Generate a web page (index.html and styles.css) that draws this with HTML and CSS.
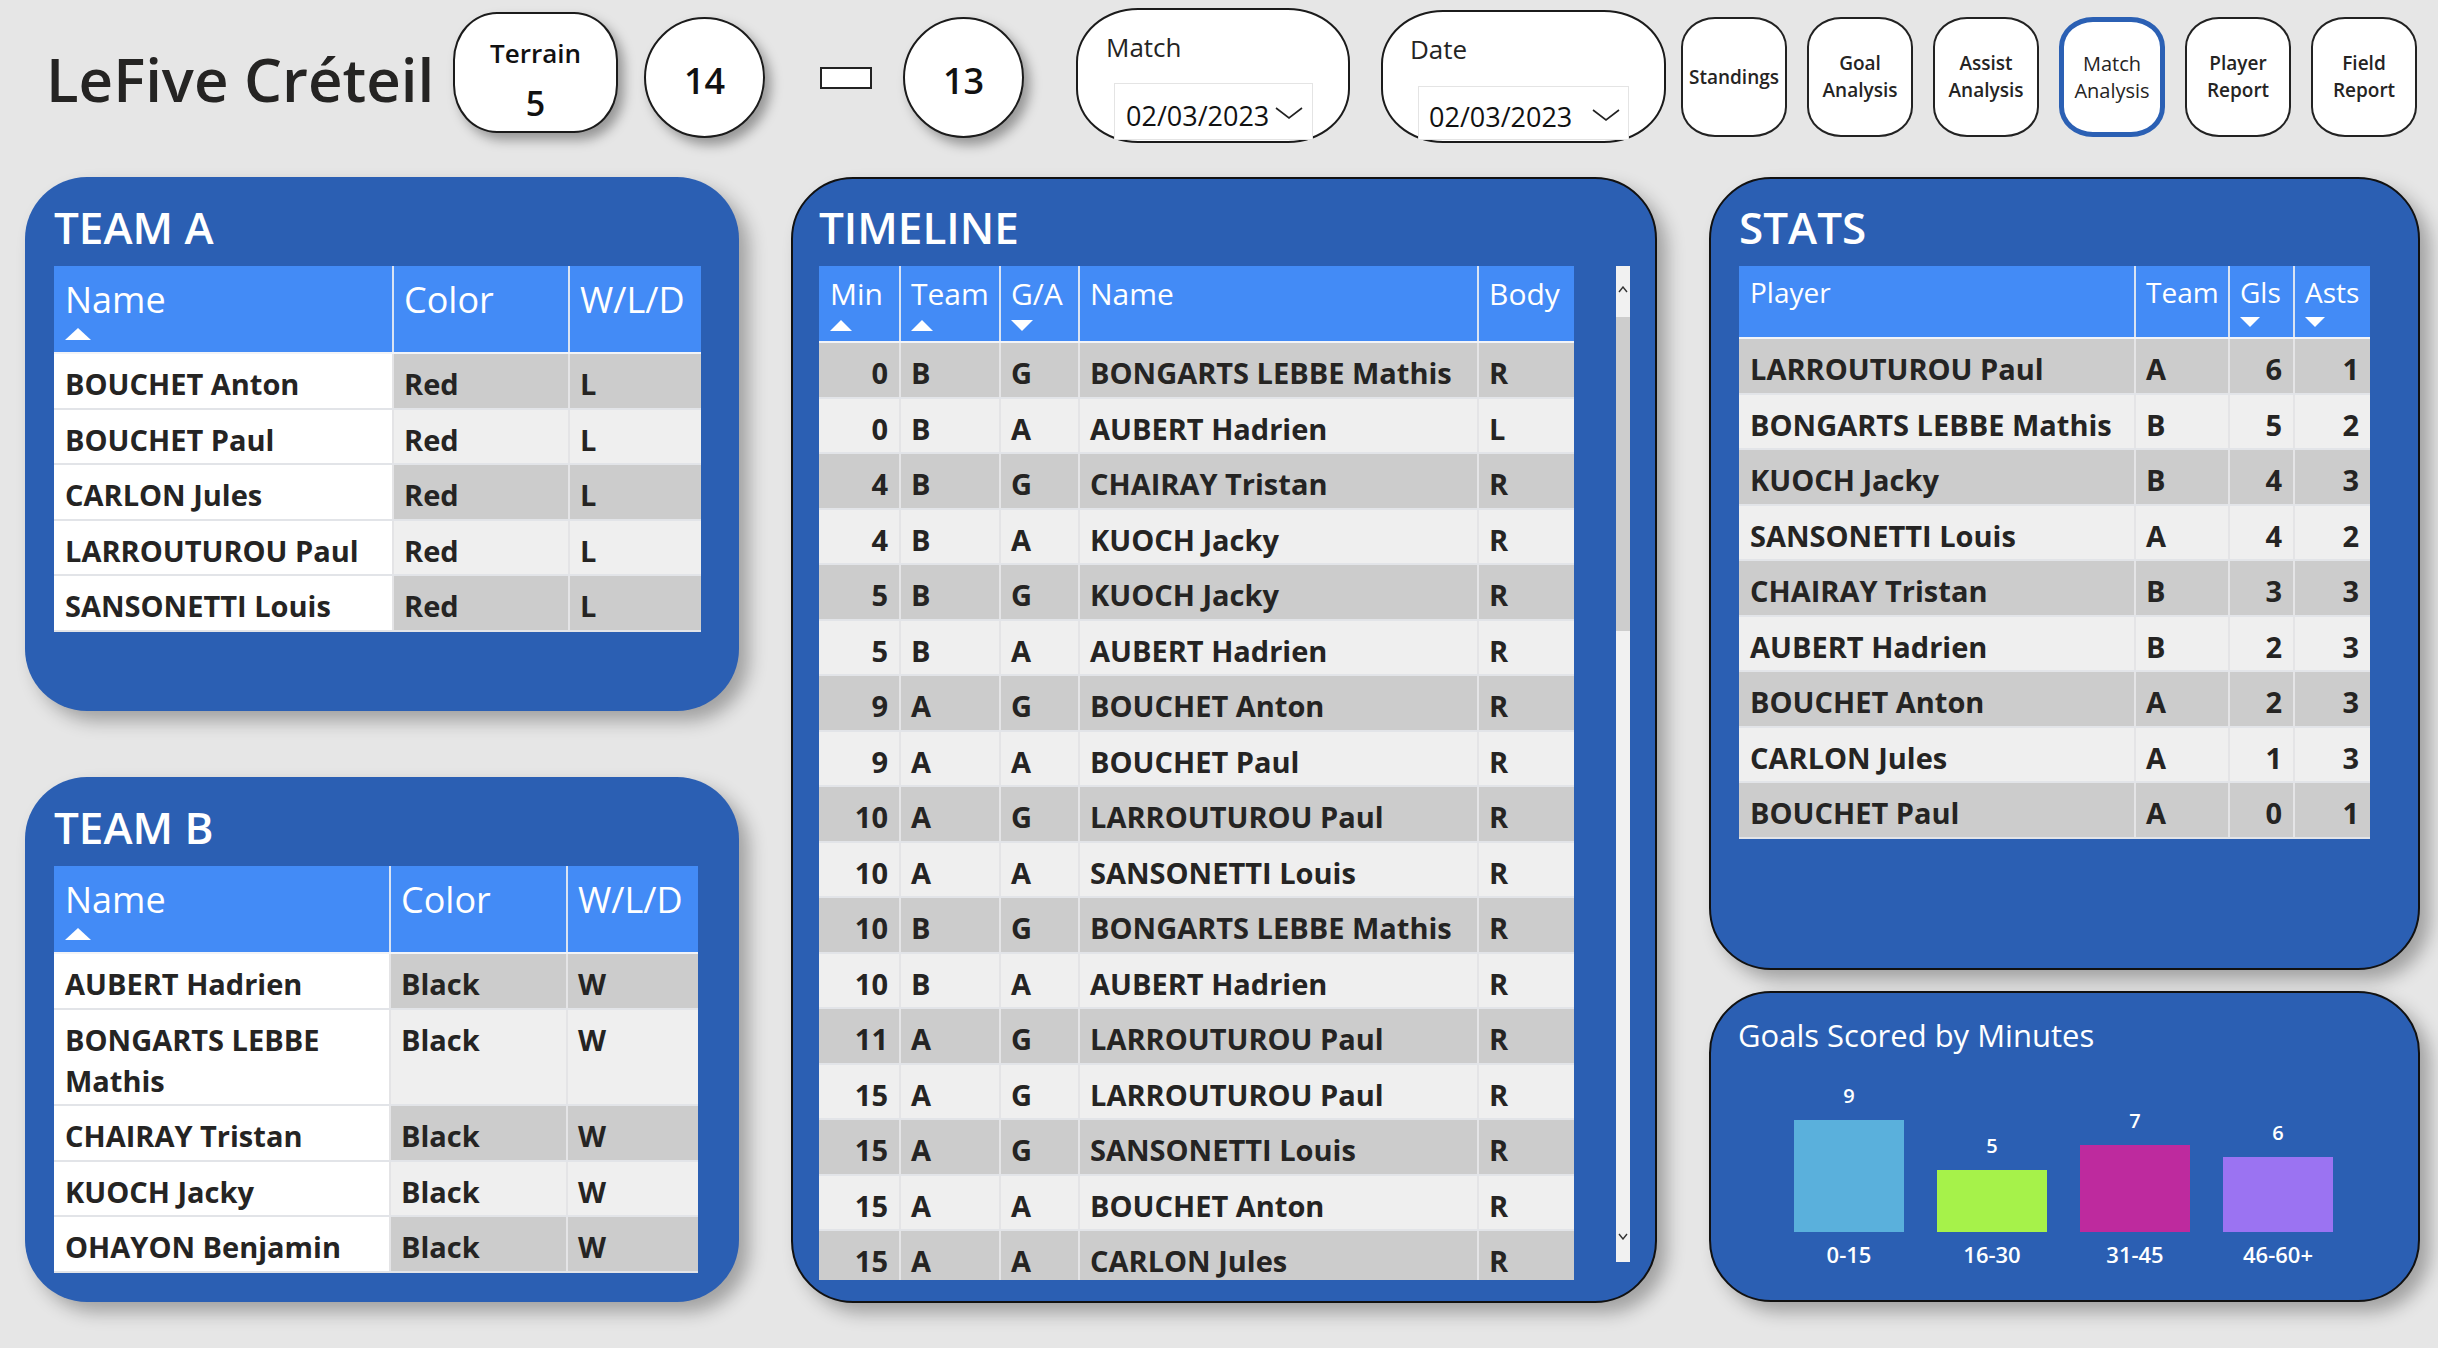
FILE: index.html
```html
<!DOCTYPE html>
<html lang="fr">
<head>
<meta charset="utf-8">
<title>LeFive Créteil – Match Analysis</title>
<link rel="stylesheet" href="styles.css">
</head>
<body>
<div class="page">
  <header class="topbar">
    <h1 class="title">LeFive Créteil</h1>
    <div class="oval terrain"><span class="t-label">Terrain</span><span class="t-num">5</span></div>
    <div class="oval score score-a">14</div>
    <div class="vs-box"></div>
    <div class="oval score score-b">13</div>
    <div class="slicer slicer-match">
      <div class="slicer-label">Match</div>
      <div class="slicer-field">
        <span class="slicer-value">02/03/2023</span>
        <svg class="chev" width="28" height="12" viewBox="0 0 28 12"><polyline points="1,1 14,11 27,1" fill="none" stroke="#222" stroke-width="1.6"/></svg>
      </div>
    </div>
    <div class="slicer slicer-date">
      <div class="slicer-label">Date</div>
      <div class="slicer-field">
        <span class="slicer-value">02/03/2023</span>
        <svg class="chev" width="28" height="12" viewBox="0 0 28 12"><polyline points="1,1 14,11 27,1" fill="none" stroke="#222" stroke-width="1.6"/></svg>
      </div>
    </div>
    <nav class="nav">
      <div class="navbtn">Standings</div>
      <div class="navbtn">Goal<br>Analysis</div>
      <div class="navbtn">Assist<br>Analysis</div>
      <div class="navbtn active">Match<br>Analysis</div>
      <div class="navbtn">Player<br>Report</div>
      <div class="navbtn">Field<br>Report</div>
    </nav>
  </header>

  <main class="main">
    <div class="col col-left">
      <section class="panel team">
        <h2 class="panel-title">TEAM A</h2>
        <div class="tbl team-a">
          <div class="tr th"><div class="c">Name<span class="arrow up"></span></div><div class="c">Color</div><div class="c">W/L/D</div></div>
          <div class="tr odd"><div class="c name">BOUCHET Anton</div><div class="c">Red</div><div class="c">L</div></div>
          <div class="tr even"><div class="c name">BOUCHET Paul</div><div class="c">Red</div><div class="c">L</div></div>
          <div class="tr odd"><div class="c name">CARLON Jules</div><div class="c">Red</div><div class="c">L</div></div>
          <div class="tr even"><div class="c name">LARROUTUROU Paul</div><div class="c">Red</div><div class="c">L</div></div>
          <div class="tr odd"><div class="c name">SANSONETTI Louis</div><div class="c">Red</div><div class="c">L</div></div>
        </div>
      </section>
      <section class="panel team team-b-panel">
        <h2 class="panel-title">TEAM B</h2>
        <div class="tbl team-b">
          <div class="tr th"><div class="c">Name<span class="arrow up"></span></div><div class="c">Color</div><div class="c">W/L/D</div></div>
          <div class="tr odd"><div class="c name">AUBERT Hadrien</div><div class="c">Black</div><div class="c">W</div></div>
          <div class="tr even"><div class="c name">BONGARTS LEBBE Mathis</div><div class="c">Black</div><div class="c">W</div></div>
          <div class="tr odd"><div class="c name">CHAIRAY Tristan</div><div class="c">Black</div><div class="c">W</div></div>
          <div class="tr even"><div class="c name">KUOCH Jacky</div><div class="c">Black</div><div class="c">W</div></div>
          <div class="tr odd"><div class="c name">OHAYON Benjamin</div><div class="c">Black</div><div class="c">W</div></div>
        </div>
      </section>
    </div>

    <section class="panel bordered timeline">
      <h2 class="panel-title">TIMELINE</h2>
      <div class="tl-area">
        <div class="tl-wrap">
          <div class="tbl tl">
            <div class="tr th"><div class="c">Min<span class="arrow up"></span></div><div class="c">Team<span class="arrow up"></span></div><div class="c">G/A<span class="arrow down"></span></div><div class="c">Name</div><div class="c">Body</div></div>
            <div class="tl-body">
              <div class="tr odd"><div class="c num">0</div><div class="c">B</div><div class="c">G</div><div class="c">BONGARTS LEBBE Mathis</div><div class="c">R</div></div>
              <div class="tr even"><div class="c num">0</div><div class="c">B</div><div class="c">A</div><div class="c">AUBERT Hadrien</div><div class="c">L</div></div>
              <div class="tr odd"><div class="c num">4</div><div class="c">B</div><div class="c">G</div><div class="c">CHAIRAY Tristan</div><div class="c">R</div></div>
              <div class="tr even"><div class="c num">4</div><div class="c">B</div><div class="c">A</div><div class="c">KUOCH Jacky</div><div class="c">R</div></div>
              <div class="tr odd"><div class="c num">5</div><div class="c">B</div><div class="c">G</div><div class="c">KUOCH Jacky</div><div class="c">R</div></div>
              <div class="tr even"><div class="c num">5</div><div class="c">B</div><div class="c">A</div><div class="c">AUBERT Hadrien</div><div class="c">R</div></div>
              <div class="tr odd"><div class="c num">9</div><div class="c">A</div><div class="c">G</div><div class="c">BOUCHET Anton</div><div class="c">R</div></div>
              <div class="tr even"><div class="c num">9</div><div class="c">A</div><div class="c">A</div><div class="c">BOUCHET Paul</div><div class="c">R</div></div>
              <div class="tr odd"><div class="c num">10</div><div class="c">A</div><div class="c">G</div><div class="c">LARROUTUROU Paul</div><div class="c">R</div></div>
              <div class="tr even"><div class="c num">10</div><div class="c">A</div><div class="c">A</div><div class="c">SANSONETTI Louis</div><div class="c">R</div></div>
              <div class="tr odd"><div class="c num">10</div><div class="c">B</div><div class="c">G</div><div class="c">BONGARTS LEBBE Mathis</div><div class="c">R</div></div>
              <div class="tr even"><div class="c num">10</div><div class="c">B</div><div class="c">A</div><div class="c">AUBERT Hadrien</div><div class="c">R</div></div>
              <div class="tr odd"><div class="c num">11</div><div class="c">A</div><div class="c">G</div><div class="c">LARROUTUROU Paul</div><div class="c">R</div></div>
              <div class="tr even"><div class="c num">15</div><div class="c">A</div><div class="c">G</div><div class="c">LARROUTUROU Paul</div><div class="c">R</div></div>
              <div class="tr odd"><div class="c num">15</div><div class="c">A</div><div class="c">G</div><div class="c">SANSONETTI Louis</div><div class="c">R</div></div>
              <div class="tr even"><div class="c num">15</div><div class="c">A</div><div class="c">A</div><div class="c">BOUCHET Anton</div><div class="c">R</div></div>
              <div class="tr odd"><div class="c num">15</div><div class="c">A</div><div class="c">A</div><div class="c">CARLON Jules</div><div class="c">R</div></div>
            </div>
          </div>
        </div>
        <div class="scrollbar">
          <div class="sb-up"><svg width="10" height="7" viewBox="0 0 10 7"><polyline points="1,6 5,1 9,6" fill="none" stroke="#333" stroke-width="1.4"/></svg></div>
          <div class="sb-thumb"></div>
          <div class="sb-rest"><svg width="10" height="7" viewBox="0 0 10 7"><polyline points="1,1 5,6 9,1" fill="none" stroke="#333" stroke-width="1.4"/></svg></div>
        </div>
      </div>
    </section>

    <div class="col col-right">
      <section class="panel bordered stats">
        <h2 class="panel-title">STATS</h2>
        <div class="tbl st">
          <div class="tr th"><div class="c">Player</div><div class="c">Team</div><div class="c">Gls<span class="arrow down"></span></div><div class="c">Asts<span class="arrow down"></span></div></div>
          <div class="tr odd"><div class="c">LARROUTUROU Paul</div><div class="c">A</div><div class="c num">6</div><div class="c num">1</div></div>
          <div class="tr even"><div class="c">BONGARTS LEBBE Mathis</div><div class="c">B</div><div class="c num">5</div><div class="c num">2</div></div>
          <div class="tr odd"><div class="c">KUOCH Jacky</div><div class="c">B</div><div class="c num">4</div><div class="c num">3</div></div>
          <div class="tr even"><div class="c">SANSONETTI Louis</div><div class="c">A</div><div class="c num">4</div><div class="c num">2</div></div>
          <div class="tr odd"><div class="c">CHAIRAY Tristan</div><div class="c">B</div><div class="c num">3</div><div class="c num">3</div></div>
          <div class="tr even"><div class="c">AUBERT Hadrien</div><div class="c">B</div><div class="c num">2</div><div class="c num">3</div></div>
          <div class="tr odd"><div class="c">BOUCHET Anton</div><div class="c">A</div><div class="c num">2</div><div class="c num">3</div></div>
          <div class="tr even"><div class="c">CARLON Jules</div><div class="c">A</div><div class="c num">1</div><div class="c num">3</div></div>
          <div class="tr odd"><div class="c">BOUCHET Paul</div><div class="c">A</div><div class="c num">0</div><div class="c num">1</div></div>
        </div>
      </section>
      <section class="panel bordered goals">
        <h2 class="goals-title">Goals Scored by Minutes</h2>
        <div class="chart">
          <div class="bar-col"><span class="bar-val">9</span><div class="bar b1" style="height:112px"></div><span class="bar-cat">0-15</span></div>
          <div class="bar-col"><span class="bar-val">5</span><div class="bar b2" style="height:62px"></div><span class="bar-cat">16-30</span></div>
          <div class="bar-col"><span class="bar-val">7</span><div class="bar b3" style="height:87px"></div><span class="bar-cat">31-45</span></div>
          <div class="bar-col"><span class="bar-val">6</span><div class="bar b4" style="height:75px"></div><span class="bar-cat">46-60+</span></div>
        </div>
      </section>
    </div>
  </main>
</div>
</body>
</html>
```

FILE: styles.css
```css
* { box-sizing: border-box; margin: 0; padding: 0; }
html, body { width: 2438px; height: 1348px; }
body {
  background: #e6e6e6;
  font-family: "Open Sans", "Noto Sans", "DejaVu Sans", sans-serif;
  color: #252423;
  overflow: hidden;
}
.page { width: 2438px; height: 1348px; }

/* ---------- top bar ---------- */
.topbar { display: flex; align-items: flex-start; height: 177px; padding-left: 46px; }
.title {
  width: 407px; margin-top: 44px;
  font-size: 60px; line-height: 70px; font-weight: 600;
  color: #252423; white-space: nowrap;
}
.oval {
  background: #fff; border: 2px solid #1b1b1b;
  box-shadow: 6px 7px 12px rgba(0,0,0,0.35);
  display: flex; flex-direction: column; align-items: center;
  color: #111; font-weight: 600;
}
.terrain { width: 165px; height: 121px; margin-top: 12px; border-radius: 44px / 48px; padding-top: 23px; }
.t-label { font-size: 26px; line-height: 32px; }
.t-num { font-size: 34px; line-height: 40px; margin-top: 14px; }
.score { width: 121px; height: 121px; margin-top: 17px; border-radius: 50%; padding-top: 40px; font-size: 36px; line-height: 44px; }
.score-a { margin-left: 26px; }
.score-b { margin-left: 31px; }
.vs-box { width: 52px; height: 22px; margin-top: 67px; margin-left: 55px; background: #fff; border: 2px solid #222; }

.slicer { background: #fff; border: 2px solid #1b1b1b; border-radius: 62px / 54px; }
.slicer-label { font-size: 26px; line-height: 32px; color: #252423; }
.slicer-field { display: flex; align-items: flex-start; background: #fff; border: 1px solid #e4e4e4; margin-left: 8px; }
.slicer-value { font-size: 27px; line-height: 32px; color: #111; }
.chev { display: block; }
.slicer-match { margin-left: 52px; width: 274px; height: 135px; margin-top: 8px; padding: 21px 0 0 28px; }
.slicer-match .slicer-field { margin-top: 20px; width: 199px; height: 57px; padding: 16px 0 0 11px; }
.slicer-match .slicer-value { width: 149px; }
.slicer-match .chev { margin-top: 7px; }
.slicer-date { margin-left: 31px; width: 285px; height: 133px; margin-top: 10px; padding: 21px 0 0 27px; }
.slicer-date .slicer-field { margin-top: 21px; width: 211px; height: 54px; padding: 14px 0 0 10px; }
.slicer-date .slicer-value { width: 163px; }
.slicer-date .chev { margin-top: 8px; }

.nav { display: flex; gap: 20px; margin-left: 15px; margin-top: 17px; }
.navbtn {
  width: 106px; height: 120px;
  border: 2px solid #222; border-radius: 34px / 30px; background: #fff;
  display: flex; align-items: center; justify-content: center; text-align: center;
  font-size: 19px; line-height: 27px; font-weight: 600; color: #252423;
}
.navbtn.active { border: 5px solid #2b60b4; font-weight: 400; font-size: 20px; color: #252423; }

/* ---------- main ---------- */
.main { display: flex; align-items: flex-start; gap: 52px; padding-left: 25px; }
.col { display: flex; flex-direction: column; }
.col-left { width: 714px; gap: 66px; }
.col-right { width: 711px; gap: 21px; }

.panel {
  background: #2b5fb3; border-radius: 62px;
  box-shadow: 10px 10px 18px rgba(0,0,0,0.3);
  padding: 24px 0 0 29px;
}
.panel.bordered { border: 2px solid #111; padding-top: 22px; }
.panel-title { font-size: 44px; line-height: 52px; font-weight: 600; color: #fff; margin-bottom: 13px; }

.team { height: 534px; }
.team-b-panel { height: 525px; }
.timeline { width: 866px; height: 1126px; padding-left: 26px; }
.stats { height: 793px; padding-left: 28px; }
.goals { height: 311px; padding: 20px 0 0 27px; }

/* ---------- tables ---------- */
.tbl.team-a { width: 647px; }
.tbl.team-b { width: 644px; }
.tbl.tl { width: 755px; }
.tbl.st { width: 631px; }
.tr { display: grid; width: 100%; }
.team-a .tr { grid-template-columns: 338px 176px 133px; }
.team-b .tr { grid-template-columns: 335px 177px 132px; }
.tl .tr { grid-template-columns: 80px 100px 79px 399px 97px; }
.st .tr { grid-template-columns: 395px 94px 65px 77px; }

.th { background: #438bf6; border-bottom: 2px solid #f2f4f8; }
.th .c { border-left: 2px solid #d9e3f3; color: #fff; font-weight: 400; white-space: nowrap; }
.th .c:first-child { border-left: none; }
.arrow { display: block; width: 0; height: 0; border-left: 13px solid transparent; border-right: 13px solid transparent; }
.arrow.up { border-bottom: 12px solid #fff; }
.arrow.down { border-top: 12px solid #fff; }

.team .th { height: 88px; }
.team .th .c { font-size: 36px; line-height: 44px; padding: 12px 0 0 10px; }
.team .th .c:first-child { padding-left: 11px; }
.team .th .arrow { margin-top: 6px; }

.tl .th { height: 77px; }
.tl .th .c { font-size: 30px; line-height: 36px; padding: 10px 0 0 10px; }
.tl .th .c:first-child { padding-left: 11px; }
.tl .th .arrow { margin-top: 8px; border-left-width: 11.5px; border-right-width: 11.5px; }
.tl .th .arrow.up { border-bottom-width: 11px; }
.tl .th .arrow.down { border-top-width: 11px; }

.st .th { height: 73px; }
.st .th .c { font-size: 28px; line-height: 34px; padding: 9px 0 0 10px; }
.st .th .c:first-child { padding-left: 11px; }
.st .th .arrow { margin-top: 8px; border-left-width: 10.5px; border-right-width: 10.5px; border-top-width: 10px; }

.tr.odd, .tr.even { border-bottom: 2px solid #e2e4e8; }
.odd .c, .even .c {
  font-size: 29px; line-height: 41px; font-weight: 700; color: #252423;
  padding: 9px 10px 3.5px 10px; border-left: 2px solid #e4e4e6;
}
.odd .c:first-child, .even .c:first-child { border-left: none; padding-left: 11px; }
.odd .c { background: #cccccc; }
.even .c { background: #efefef; }
.team .c.name { background: #fff; }
.odd .c.num, .even .c.num { text-align: right; padding-right: 11px; }
.tl .odd .c, .tl .even .c { white-space: nowrap; }

.tl-area { display: flex; align-items: flex-start; }
.tl-wrap { width: 755px; height: 1014px; overflow: hidden; }
.tl-body { height: 937px; overflow: hidden; }

.scrollbar { margin-left: 42px; width: 14px; height: 996px; background: #f1f1f1; display: flex; flex-direction: column; }
.sb-up { height: 51px; display: flex; justify-content: center; padding-top: 20px; }
.sb-up svg, .sb-rest svg { display: block; }
.sb-thumb { height: 314px; background: #cdcdcd; }
.sb-rest { flex: 1; display: flex; flex-direction: column; justify-content: flex-end; align-items: center; padding-bottom: 22px; }

/* ---------- chart ---------- */
.goals-title { font-size: 31px; line-height: 40px; font-weight: 400; color: #fff; }
.chart { display: flex; align-items: flex-end; gap: 33px; margin: 29px 0 0 56px; }
.bar-col { width: 110px; display: flex; flex-direction: column; align-items: center; color: #fff; font-weight: 600; }
.bar-val { font-size: 20px; line-height: 24px; margin-bottom: 12px; }
.bar { width: 110px; }
.bar-cat { font-size: 22px; line-height: 26px; margin-top: 9px; }
.b1 { background: #5ab0dc; }
.b2 { background: #a6f24a; }
.b3 { background: #be2a9e; }
.b4 { background: #9b73f2; }
```
